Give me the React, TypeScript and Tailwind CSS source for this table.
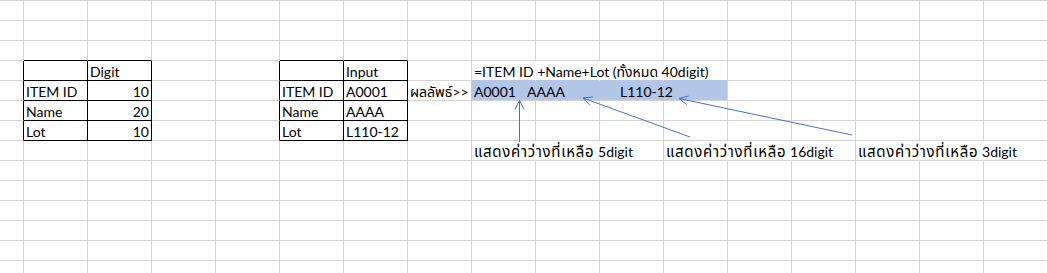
import React from "react";

// sheet geometry: first (cut off) column is 24px, the rest 64px, rows are 20px
const ROWS = 14;
const COLS = 17;

type Cell = { text?: React.ReactNode; right?: boolean; span?: number };

// the Thai fallback runs narrower than the original font, so the notes get a little tracking
const Th = ({ children }: { children: React.ReactNode }) => (
  <span className="text-[15px] tracking-[0.7px]">{children}</span>
);

const cells: Record<string, Cell> = {
  "3-2": { text: "Digit" },
  "4-1": { text: "ITEM ID" },
  "4-2": { text: "10", right: true },
  "5-1": { text: "Name" },
  "5-2": { text: "20", right: true },
  "6-1": { text: "Lot" },
  "6-2": { text: "10", right: true },

  "3-6": { text: "Input" },
  "4-5": { text: "ITEM ID" },
  "4-6": { text: "A0001" },
  "5-5": { text: "Name" },
  "5-6": { text: "AAAA" },
  "6-5": { text: "Lot" },
  "6-6": { text: "L110-12" },

  "3-8": { text: "=ITEM ID +Name+Lot (ทั้งหมด 40digit)" },
  "4-7": { text: "ผลลัพธ์>>" },
  "4-8": {
    span: 4,
    text: (
      <>
        <span className="inline-block w-[53px]">A0001</span>
        <span className="inline-block w-[93px]">AAAA</span>
        <span>L110-12</span>
      </>
    ),
  },
  "7-8": { text: <><Th>แสดงค่าว่างที่เหลือ</Th> 5digit</> },
  "7-11": { text: <><Th>แสดงค่าว่างที่เหลือ</Th> 16digit</> },
  "7-14": { text: <><Th>แสดงค่าว่างที่เหลือ</Th> 3digit</> },
};

const skip = new Set(["4-9", "4-10", "4-11"]);

const inTable = (r: number, c: number) =>
  r >= 3 && r <= 6 && ((c >= 1 && c <= 2) || (c >= 5 && c <= 6));

// text that spills into the next cells hides those gridlines
const spill: Record<number, number[]> = {
  3: [8, 9, 10],
  7: [8, 9, 11, 12, 14, 15],
};

function rightClass(r: number, c: number) {
  if (inTable(r, c) || inTable(r, c + 1)) return "border-r-black";
  if (r === 4 && c === 7) return "border-r-[#b4c6e7]";
  if (spill[r]?.includes(c)) return "border-r-transparent";
  return "border-r-[#d4d4d4]";
}

function bottomClass(r: number, c: number) {
  if (inTable(r, c) || inTable(r + 1, c)) return "border-b-black";
  if (r === 3 && c >= 8 && c <= 11) return "border-b-[#b4c6e7]";
  return "border-b-[#d4d4d4]";
}

type Arrow = { tip: [number, number]; tail: [number, number] };

const arrows: Arrow[] = [
  { tip: [519.5, 100.5], tail: [519.5, 142] },
  { tip: [583, 98], tail: [690, 137] },
  { tip: [679, 98.5], tail: [852, 135] },
];

function wings(a: Arrow) {
  const [tx, ty] = a.tip;
  const ang = Math.atan2(a.tail[1] - ty, a.tail[0] - tx);
  const len = 10;
  const spread = 0.46;
  const p1 = [tx + len * Math.cos(ang - spread), ty + len * Math.sin(ang - spread)];
  const p2 = [tx + len * Math.cos(ang + spread), ty + len * Math.sin(ang + spread)];
  return `M${p1[0]},${p1[1]} L${tx},${ty} L${p2[0]},${p2[1]}`;
}

export default function App() {
  const rows = Array.from({ length: ROWS }, (_, r) => r);
  const cols = Array.from({ length: COLS }, (_, c) => c);

  return (
    <div className="relative h-[273px] w-[1048px] overflow-hidden bg-white font-['Lato','Noto_Sans_Thai','Noto_Sans',sans-serif] text-[14px] text-black">
      <div className="grid grid-cols-[24px_repeat(16,64px)] border-t border-t-[#d4d4d4]">
        {rows.map((r) =>
          cols.map((c) => {
            const key = `${r}-${c}`;
            if (skip.has(key)) return null;
            const cell = cells[key];
            return (
              <div
                key={key}
                className={`flex h-[20px] items-end whitespace-nowrap border-r border-b ${rightClass(r, c)} ${bottomClass(r, c)} ${
                  cell?.span === 4 ? "col-span-4 bg-[#b4c6e7]" : ""
                } ${cell?.right ? "justify-end pr-[2px]" : "justify-start pl-[2px]"}`}
              >
                {cell?.text && <span className="leading-[16px]">{cell.text}</span>}
              </div>
            );
          })
        )}
      </div>

      <svg
        className="pointer-events-none absolute inset-0"
        width={1048}
        height={273}
        viewBox="0 0 1048 273"
      >
        {arrows.map((a, i) => (
          <g key={i} stroke="#4472c4" strokeWidth={1} fill="none">
            <line x1={a.tail[0]} y1={a.tail[1]} x2={a.tip[0]} y2={a.tip[1]} />
            <path d={wings(a)} />
          </g>
        ))}
      </svg>
    </div>
  );
}
